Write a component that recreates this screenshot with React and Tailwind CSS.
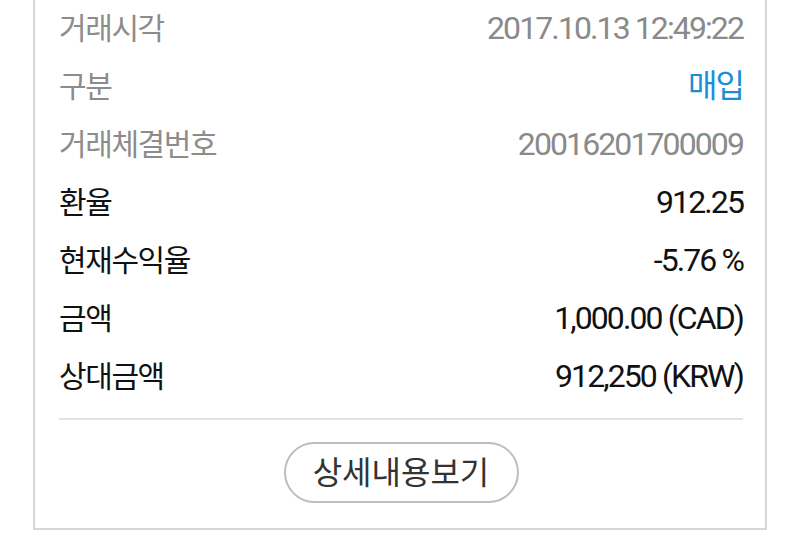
export default function App() {
  const rows = [
    { label: "거래시각", value: "2017.10.13 12:49:22", lc: "text-[#8c8c8c]", vc: "text-[#8a8a8a]" },
    { label: "구분", value: "매입", lc: "text-[#8c8c8c]", vc: "text-[#1b8fd6]" },
    { label: "거래체결번호", value: "20016201700009", lc: "text-[#8c8c8c]", vc: "text-[#8a8a8a]" },
    { label: "환율", value: "912.25", lc: "text-[#111]", vc: "text-[#111]" },
    { label: "현재수익율", value: "-5.76 %", lc: "text-[#111]", vc: "text-[#111]" },
    { label: "금액", value: "1,000.00 (CAD)", lc: "text-[#111]", vc: "text-[#111]" },
    { label: "상대금액", value: "912,250 (KRW)", lc: "text-[#111]", vc: "text-[#111]" },
  ];
  return (
    <div className="w-[800px] h-[540px] bg-white overflow-hidden" style={{ fontFamily: "Roboto, 'Noto Sans CJK KR', sans-serif" }}>
      <div className="mx-[33px] border-x-2 border-b-2 border-[#d6d6d6] pl-[24px] pr-[22px] pb-[25px]">
        <div className="flex flex-col">
          {rows.map((r) => (
            <div key={r.label} className="h-[58px] flex items-center justify-between">
              <span className={`text-[30px] leading-none tracking-[-1.4px] ${r.lc}`}>{r.label}</span>
              <span className={`text-[32px] leading-none tracking-[-1.9px] mb-[2px] ${r.vc}`}>{r.value}</span>
            </div>
          ))}
        </div>
        <div className="mt-[12px] h-[2px] bg-[#e2e2e2]" />
        <div className="flex justify-center pt-[22px]">
          <div className="w-[235px] h-[61px] rounded-full border-2 border-[#bdbdbd] flex items-center justify-center text-[32px] leading-none text-[#333]">
            상세내용보기
          </div>
        </div>
      </div>
    </div>
  );
}
